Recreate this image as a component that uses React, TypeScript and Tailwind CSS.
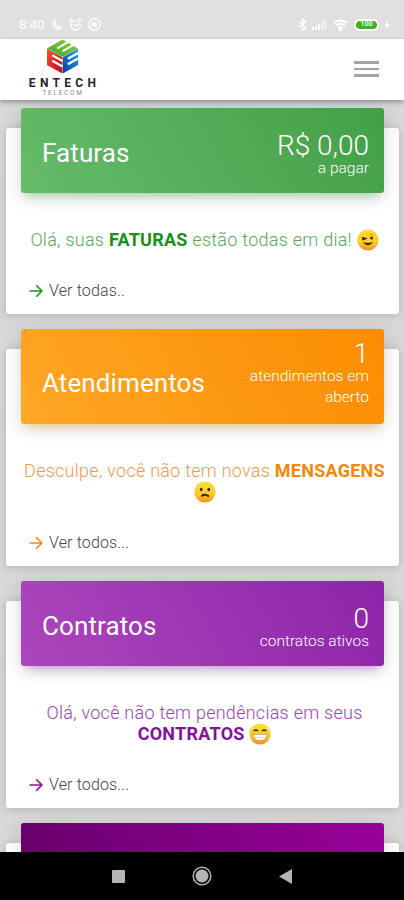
import React from 'react';

// --- Emoji ---
type Mood = 'wink' | 'confused' | 'grin';

const Emoji: React.FC<{ mood: Mood }> = ({ mood }) => (
  <svg className="inline-block w-[22px] h-[22px] -mt-[5px] -mb-[3px] align-middle" viewBox="0 0 22 22" fill="none">
    <defs>
      <linearGradient id={`face-${mood}`} x1="0" y1="0" x2="0" y2="1">
        <stop offset="0" stopColor="#fde030" />
        <stop offset="0.6" stopColor="#fccb28" />
        <stop offset="1" stopColor="#f0901f" />
      </linearGradient>
    </defs>
    <circle cx="11" cy="11" r="10.6" fill={`url(#face-${mood})`} />
    {mood === 'wink' && (
      <g stroke="#33240d" strokeLinecap="round">
        <path d="M5.500 8.700l3 .9-2.600.9" strokeWidth="1.500" fill="#33240d" />
        <path d="M12.800 5.800c1.200-.9 2.600-.7 3.600.4" stroke="#8a5a14" strokeWidth="0.500" />
        <ellipse cx="14.600" cy="9" rx="1.400" ry="1.600" fill="#33240d" stroke="none" />
        <path d="M7.300 14c2 2.200 5.400 2.200 7.400 0-2.400.6-5 .6-7.400 0z" fill="#33240d" strokeWidth="1.100" />
      </g>
    )}
    {mood === 'confused' && (
      <g fill="#33240d">
        <ellipse cx="7.200" cy="8.500" rx="1.400" ry="1.800" />
        <ellipse cx="14.800" cy="8.500" rx="1.400" ry="1.800" />
        <path d="M8 14.800c1.800-1.500 4-1.300 6.200.1" stroke="#33240d" strokeWidth="2" strokeLinecap="round" fill="none" />
      </g>
    )}
    {mood === 'grin' && (
      <g strokeLinecap="round">
        <path d="M5.200 7.600c1-.7 2.400-.7 3.400 0M13.400 7.600c1-.7 2.400-.7 3.400 0" stroke="#33240d" strokeWidth="1.500" />
        <path d="M4.200 11.300h13.600c0 4.200-2.600 6.300-6.800 6.300s-6.800-2.100-6.800-6.300z" fill="#fff" stroke="#b77a22" strokeWidth="0.600" />
        <path d="M4.800 14.300h12.400" stroke="#c9b28c" strokeWidth="0.500" />
      </g>
    )}
  </svg>
);

// --- Status bar ---
const StatusBar: React.FC = () => (
  <div className="flex h-[39px] shrink-0 items-center justify-between bg-[#e0e0e0] pt-[10px] pl-[19px] pr-[14px] text-white">
    <div className="flex items-center gap-[6px]">
      <span className="text-[13px] leading-none tracking-[0.2px]">8:40</span>
      <svg className="h-3 w-3" viewBox="0 0 12 12" fill="none" stroke="currentColor" strokeWidth="1.300" strokeLinejoin="round">
        <path d="M4 1a5 5 0 1 0 7 7A5.500 5.500 0 0 1 4 1z" />
      </svg>
      <svg className="h-[13px] w-[13px]" viewBox="0 0 12 12" fill="none" stroke="currentColor" strokeWidth="1.300" strokeLinecap="round">
        <circle cx="6" cy="6.600" r="4.300" />
        <path d="M4.500 6.300l1.500 1.200 1.700-1.500M.7 2.400 2.700.8M11.300 2.400 9.300.8" />
      </svg>
      <svg className="h-[13px] w-[13px]" viewBox="0 0 12 12" fill="none" stroke="currentColor" strokeWidth="1.200">
        <circle cx="6" cy="6" r="5.300" />
        <path d="M4 4l4 4M4.200 7.800v-3h3M7.800 4.800v3h-2" />
      </svg>
    </div>
    <div className="flex items-center">
      <svg className="h-[13px] w-[9px]" viewBox="0 0 9 13" fill="none" stroke="currentColor" strokeWidth="1.300">
        <path d="M1 3.500l6.500 6L4.500 12.300V.8l3 2.700-6.500 6" />
      </svg>
      <svg className="ml-[5px] h-[11px] w-[14px]" viewBox="0 0 14 11" fill="currentColor">
        <path d="M0 8h2v3H0zM3 6.500h2V11H3zM6 4.500h2V11H6z" />
        <path d="M9 2.500h2V11H9zM12 .5h2V11h-2z" opacity=".55" />
      </svg>
      <svg className="ml-[7px] h-[12px] w-[15px]" viewBox="0 0 15 12" fill="none" stroke="currentColor" strokeWidth="1.800">
        <path d="M.8 4.200c4-3.600 9.400-3.600 13.400 0M3 6.800c2.700-2.400 6.300-2.400 9 0M5.200 9.200c1.400-1.100 3.200-1.100 4.600 0" />
        <circle cx="7.500" cy="10.700" r=".8" />
      </svg>
      <div className="ml-[6px] flex h-[12px] w-[25px] items-center justify-center rounded-full bg-white">
        <div className="flex h-[8px] w-[21px] items-center justify-center rounded-full bg-[#3db51f]">
          <span className="text-[7px] leading-none font-medium">100</span>
        </div>
      </div>
      <svg className="ml-[5px] h-[10px] w-[6px]" viewBox="0 0 6 10" fill="currentColor">
        <path d="M3.800 0 .5 5.700h2.200L2.200 10 5.500 4.200H3.400z" />
      </svg>
    </div>
  </div>
);

// --- Logo ---
const Logo: React.FC = () => (
  <div className="flex w-[71px] flex-col items-center">
    <svg className="h-[35px] w-[33px]" viewBox="0 0 34 35" preserveAspectRatio="none">
      <defs>
        <linearGradient id="cube-top" x1="0" y1="1" x2="1" y2="0">
          <stop offset="0" stopColor="#35a936" />
          <stop offset="1" stopColor="#9bca3c" />
        </linearGradient>
        <linearGradient id="cube-left" x1="0" y1="0" x2="1" y2="1">
          <stop offset="0" stopColor="#ee5a2b" />
          <stop offset="0.5" stopColor="#e0242b" />
          <stop offset="1" stopColor="#b5121b" />
        </linearGradient>
        <linearGradient id="cube-right" x1="1" y1="0" x2="0" y2="1">
          <stop offset="0" stopColor="#1fa5e4" />
          <stop offset="1" stopColor="#0a3c9c" />
        </linearGradient>
      </defs>
      <path d="M17 .500 33 9.500 17 18 1 9.500z" fill="url(#cube-top)" />
      <path d="M1 9.800 16.800 18.300V34.500L1 26z" fill="url(#cube-left)" />
      <path d="M33 9.800 17.200 18.300V34.500L33 26z" fill="url(#cube-right)" />
      <g stroke="#fff" strokeWidth="2.200" fill="none">
        <path d="M11.500 9.300 23 2.900M17 12.200 28.500 5.900" strokeWidth="2" />
        <path d="M6.500 16.300 17 22M6.500 21.800 17 27.500" />
        <path d="M22.500 19.700 33 14M22.500 25.200 33 19.500" />
      </g>
    </svg>
    <div className="mt-[3px] pl-[4px] text-[12px] leading-[13px] font-bold tracking-[4.300px] text-[#262626]">ENTECH</div>
    <div className="pl-px text-[6.500px] leading-[7px] tracking-[1.700px] text-[#888]">TELECOM</div>
  </div>
);

// --- Card ---
interface CardProps {
  title: string;
  value: string;
  caption: React.ReactNode;
  link: string;
  headerClass: string;
  titleClass: string;
  messageClass: string;
  arrowClass: string;
  children: React.ReactNode;
}

const Card: React.FC<CardProps> = ({
  title, value, caption, link, headerClass, titleClass, messageClass, arrowClass, children
}) => (
  <section className="rounded-[3px] bg-white px-[15px] shadow-[0_1px_10px_rgba(0,0,0,0.18)]">
    <div className={`relative -mt-[20px] flex justify-between rounded-[3px] pl-[21px] pr-[15px] text-white ${headerClass}`}>
      <h2 className={`text-[26px] leading-[30px] tracking-[0.100px] ${titleClass}`}>{title}</h2>
      <div className="text-right">
        <div className="text-[28px] leading-[26px] font-light">{value}</div>
        <div className="-mt-px text-[15.500px] leading-[21px] font-light">{caption}</div>
      </div>
    </div>
    <p className={`-mx-2 h-auto pt-[36px] pl-[4px] text-center text-[18px] leading-[21px] font-light tracking-[0.260px] whitespace-nowrap ${messageClass}`}>{children}</p>
    <div className="flex h-[64px] items-end pb-[13px] pl-[7px]">
      <a className="flex items-center gap-[6px] text-[16px] leading-[21px] font-light tracking-[0.150px] text-[#444]">
        <svg className={`ml-px h-[14px] w-[14px] ${arrowClass}`} viewBox="0 0 14 14" fill="none" stroke="currentColor" strokeWidth="1.600">
          <path d="M.5 7h12M7.200 1.300 12.900 7l-5.700 5.700" />
        </svg>
        {link}
      </a>
    </div>
  </section>
);

const NavigationBar: React.FC = () => (
  <div className="z-10 flex h-[48px] shrink-0 items-center justify-between bg-black pl-[112px] pr-[112px]">
    <div className="h-[13px] w-[13px] rounded-[1px] bg-[#b5b5b5]" />
    <svg className="h-5 w-5" viewBox="0 0 20 20" fill="none">
      <circle cx="10" cy="10" r="8.800" stroke="#b5b5b5" strokeWidth="1.500" />
      <circle cx="10" cy="10" r="6.500" fill="#b5b5b5" />
    </svg>
    <svg className="h-[15px] w-[13px]" viewBox="0 0 13 15" fill="#b5b5b5">
      <path d="M0 7.500 13 0v15z" />
    </svg>
  </div>
);

export default function App() {
  return (
    <div className="flex h-[900px] w-[404px] flex-col overflow-hidden bg-[#d8d8d8] font-['Roboto',sans-serif]">
      <StatusBar />
      <header className="z-10 flex h-[61px] shrink-0 items-start justify-between bg-white pl-[27px] pr-[25px] shadow-[0_2px_5px_rgba(0,0,0,0.35)]">
        <Logo />
        <button className="mt-[22px] flex w-[25px] flex-col gap-[4px]" aria-label="Menu">
          <span className="h-[2.500px] w-full bg-[#a3a3a3]" />
          <span className="h-[2.500px] w-full bg-[#a3a3a3]" />
          <span className="h-[2.500px] w-full bg-[#a3a3a3]" />
        </button>
      </header>

      <main className="flex min-h-0 flex-1 flex-col gap-[35px] overflow-hidden pt-[28px] pl-[6px] pr-[5px]">
        <Card
          title="Faturas"
          value="R$ 0,00"
          caption="a pagar"
          link="Ver todas.."
          headerClass="h-[85px] pt-[25px] bg-linear-[60deg,#66bb6a,#43a047] shadow-[0_4px_20px_rgba(0,0,0,0.14),0_7px_10px_-5px_rgba(76,175,80,0.4)]"
          titleClass="pt-[5px]"
          messageClass="text-[#55aa58]"
          arrowClass="text-[#16991b]"
        >
          Olá, suas <b className="font-bold text-[#16911b]">FATURAS</b> estão todas em dia! <Emoji mood="wink" />
        </Card>
        <Card
          title="Atendimentos"
          value="1"
          caption={<>atendimentos em<br />aberto</>}
          link="Ver todos..."
          headerClass="h-[95px] pt-[12px] bg-linear-[60deg,#ffa726,#fb8c00] shadow-[0_4px_20px_rgba(0,0,0,0.14),0_7px_10px_-5px_rgba(255,152,0,0.4)]"
          titleClass="pt-[27px]"
          messageClass="text-[#fb9648]"
          arrowClass="text-[#f58a0b]"
        >
          Desculpe, você não tem novas <b className="font-bold text-[#f5870a]">MENSAGENS</b><br /><Emoji mood="confused" />
        </Card>
        <Card
          title="Contratos"
          value="0"
          caption="contratos ativos"
          link="Ver todos..."
          headerClass="h-[85px] pt-[25px] bg-linear-[60deg,#ab47bc,#8e24aa] shadow-[0_4px_20px_rgba(0,0,0,0.14),0_7px_10px_-5px_rgba(156,39,176,0.4)]"
          titleClass="pt-[5px]"
          messageClass="text-[#9a44b2]"
          arrowClass="text-[#8f129b]"
        >
          Olá, você não tem pendências em seus<br /><b className="font-bold text-[#85119b]">CONTRATOS</b> <Emoji mood="grin" />
        </Card>
        <section className="h-[180px] shrink-0 rounded-[3px] bg-white px-[15px] shadow-[0_1px_10px_rgba(0,0,0,0.18)]">
          <div className="relative -mt-[20px] h-[85px] rounded-[3px] bg-linear-[60deg,#65006a,#990099] shadow-[0_4px_20px_rgba(0,0,0,0.14)]" />
        </section>
      </main>

      <NavigationBar />
    </div>
  );
}
